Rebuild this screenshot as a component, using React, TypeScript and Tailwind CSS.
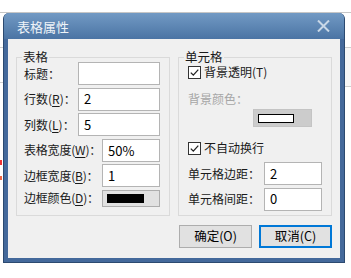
import React from "react";

const font = "font-['Microsoft_YaHei','Noto_Sans_CJK_SC','Noto_Sans',sans-serif]";

function Check() {
  return (
    <span className="w-[13px] h-[13px] border border-[#333] bg-white flex items-center justify-center shrink-0">
      <svg width="11" height="11" viewBox="0 0 11 11">
        <path d="M1.8 5.6 L4.3 8.1 L9.3 2.6" fill="none" stroke="#222" strokeWidth="1.3" />
      </svg>
    </span>
  );
}

function Field({ value, w }: { value: string; w: string }) {
  return (
    <div className={`${w} shrink-0 h-[23px] border border-[#b4b4b4] bg-white flex items-center pl-[5px] text-[13px] text-black`}>
      {value}
    </div>
  );
}

function Key({ k }: { k: string }) {
  return <span className="underline underline-offset-[2px] decoration-[1px]">{k}</span>;
}

export default function App() {
  return (
    <div className={`relative w-[351px] h-[278px] bg-white overflow-hidden whitespace-nowrap text-[12px] text-[#1a1a1a] ${font}`}>
      {/* page behind the dialog */}
      <div className="absolute right-0 top-[47px] w-[8px] h-[40px] border-y border-l border-[#cfcfcf] bg-[#f7f7f7]" />
      <div className="absolute left-0 top-[47px] w-[4px] h-[36px] border-y border-[#cfcfcf]" />
      <div className="absolute left-0 top-[160px] w-[2px] h-[5px] bg-[#e33]" />
      <div className="absolute left-0 top-[176px] w-[2px] h-[4px] bg-[#e64]" />

      <div className="h-[13px] border-b border-[#c6c6c6]" />

      <div className="relative z-10 ml-[3px] w-[342px] h-[250px] flex flex-col bg-[#44699b] rounded-t-[6px] border-x border-b border-[#2c4a70] border-t-[#5d86b3]">
        <div className="h-[26px] shrink-0 flex items-center justify-between pl-[13px] pr-[14px] rounded-t-[5px] bg-gradient-to-b from-[#729ac4] to-[#4b74a4]">
          <span className="text-[13px] text-[#eef3f8] leading-none">表格属性</span>
          <svg width="13" height="12" viewBox="0 0 13 12">
            <path d="M1 0.5 L12 11.5 M12 0.5 L1 11.5" stroke="#c9d8e7" strokeWidth="2" />
          </svg>
        </div>

        <div className="mx-[4px] h-[219px] bg-[#f0f0f0] px-[8px] flex flex-col">
          <div className="mt-[18px] flex gap-[8px]">
            {/* 表格 */}
            <div className="relative w-[154px] h-[159px] border border-[#dadada] pt-[4px] pl-[7px] pr-[9px] flex flex-col gap-[2.6px]">
              <span className="absolute -top-[9px] left-[5px] px-[1px] bg-[#f0f0f0] leading-[16px] text-[12.5px]">表格</span>
              <div className="h-[23px] flex items-center justify-between">
                <span>标题：</span>
                <Field value="" w="w-[82px]" />
              </div>
              <div className="h-[23px] flex items-center justify-between">
                <span>行数(<Key k="R" />)：</span>
                <Field value="2" w="w-[82px]" />
              </div>
              <div className="h-[23px] flex items-center justify-between">
                <span>列数(<Key k="L" />)：</span>
                <Field value="5" w="w-[82px]" />
              </div>
              <div className="h-[23px] flex items-center justify-between">
                <span className="tracking-[-0.2px]">表格宽度(<Key k="W" />)：</span>
                <Field value="50%" w="w-[58px]" />
              </div>
              <div className="h-[23px] flex items-center justify-between">
                <span className="tracking-[-0.2px]">边框宽度(<Key k="B" />)：</span>
                <Field value="1" w="w-[58px]" />
              </div>
              <div className="h-[17px] flex items-center justify-between">
                <span className="tracking-[-0.2px]">边框颜色(<Key k="D" />)：</span>
                <div className="w-[58px] shrink-0 h-[17px] border border-[#adadad] bg-[#e1e1e1] flex items-center pl-[4px]">
                  <div className="w-[37px] h-[9px] bg-black" />
                </div>
              </div>
            </div>

            {/* 单元格 */}
            <div className="relative w-[154px] h-[159px] border border-[#dadada] pt-[4px] pl-[9px] pr-[9px] flex flex-col">
              <span className="absolute -top-[9px] left-[5px] px-[1px] bg-[#f0f0f0] leading-[16px] text-[12.5px]">单元格</span>
              <div className="h-[20px] flex items-center gap-[3px]">
                <Check />
                <span>背景透明(T)</span>
              </div>
              <div className="mt-[9px] h-[16px] flex items-center text-[#a6a6a6]">背景颜色：</div>
              <div className="mt-[2px] ml-[65px] w-[59px] h-[18px] border border-[#c4c4c4] bg-[#cccccc] flex items-center pl-[4px]">
                <div className="w-[36px] h-[9px] bg-white border border-black" />
              </div>
              <div className="mt-[11px] h-[20px] flex items-center gap-[3px]">
                <Check />
                <span>不自动换行</span>
              </div>
              <div className="mt-[4px] h-[23px] flex items-center justify-between">
                <span>单元格边距：</span>
                <Field value="2" w="w-[58px]" />
              </div>
              <div className="mt-[2.6px] h-[23px] flex items-center justify-between">
                <span>单元格间距：</span>
                <Field value="0" w="w-[58px]" />
              </div>
            </div>
          </div>

          <div className="mt-[9px] flex justify-end gap-[7px]">
            <button className="w-[73px] h-[23px] border border-[#adadad] bg-[#e1e1e1] text-[12.5px] text-black">确定(O)</button>
            <button className="w-[73px] h-[23px] border-2 border-[#0078d7] bg-[#e1e1e1] text-[12.5px] text-black">取消(C)</button>
          </div>
        </div>
      </div>
    </div>
  );
}
